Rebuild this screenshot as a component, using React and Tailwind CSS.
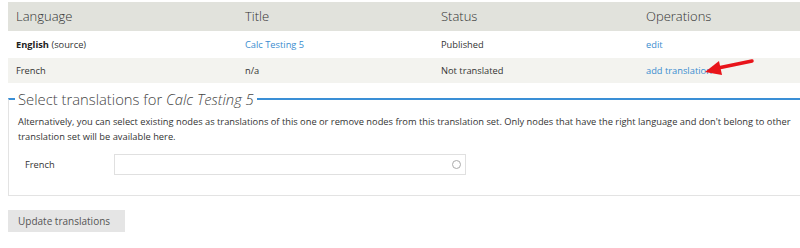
const rows = [
  { lang: 'English', note: '(source)', title: 'Calc Testing 5', link: true, status: 'Published', op: 'edit', alt: false },
  { lang: 'French', note: '', title: 'n/a', link: false, status: 'Not translated', op: 'add translation', alt: true },
];

const App = () => {
  return (
    <div className="w-[800px] h-[248px] overflow-hidden bg-white text-[#333] font-['Open_Sans',sans-serif] relative">
      <div className="w-[830px] pl-2 pt-[2px]">
        <table className="w-[792px] border-collapse text-left">
          <thead>
            <tr className="bg-[#e1e2dc] h-[29px]">
              <th className="font-light text-[13px] pl-2 w-[237px]">Language</th>
              <th className="font-light text-[13px] w-[196px]">Title</th>
              <th className="font-light text-[13px] w-[205px]">Status</th>
              <th className="font-light text-[13px]">Operations</th>
            </tr>
          </thead>
          <tbody className="text-[9.3px]">
            {rows.map((r) => (
              <tr key={r.lang} className={r.alt ? 'bg-[#f3f3ef] h-[25px]' : 'bg-white h-[27px]'}>
                <td className="pl-2">
                  {r.link ? <span className="font-bold text-[#222]">{r.lang}</span> : r.lang}
                  {r.note && <span> {r.note}</span>}
                </td>
                <td className={r.link ? 'text-[#3a8dcf]' : ''}>{r.title}</td>
                <td>{r.status}</td>
                <td className="text-[#3a8dcf]">{r.op}</td>
              </tr>
            ))}
          </tbody>
        </table>

        <fieldset className="mt-[6px] w-[810px] border border-[#e3e3e3] border-t-2 border-t-[#3a8fd6] px-[6px] pb-[20px]">
          <legend className="px-[3px] text-[14.8px] font-light text-[#444] leading-[20px]">
            Select translations for <em>Calc Testing 5</em>
          </legend>
          <div className="pl-[3px] pr-[20px]">
            <p className="text-[9.3px] leading-[15px] text-[#333] mt-[5px] w-[785px]">
              Alternatively, you can select existing nodes as translations of this one or remove nodes from this translation set. Only nodes that have the right language and don't belong to other translation set will be available here.
            </p>
            <div className="flex items-center mt-[10px]">
              <label className="text-[9.3px] w-[96px] pl-[7px]">French</label>
              <div className="w-[352px] h-[21px] border border-[#e0e0e0] flex items-center justify-end pr-[4px]">
                <span className="w-[9px] h-[9px] rounded-full border border-[#aaa]"></span>
              </div>
            </div>
          </div>
        </fieldset>

        <button className="mt-[14px] bg-[#e5e5e5] text-[#555] text-[10px] h-[22px] px-[10px] w-[117px] text-left whitespace-nowrap">
          Update translations
        </button>
      </div>

      <svg className="absolute left-[700px] top-[55px]" width="60" height="25" viewBox="0 0 60 25">
        <line x1="52" y1="6" x2="18" y2="13" stroke="#e8141a" strokeWidth="3.5" strokeLinecap="round" />
        <polygon points="5,17 19,6 22,20" fill="#e8141a" />
      </svg>
    </div>
  );
};

export default App;
